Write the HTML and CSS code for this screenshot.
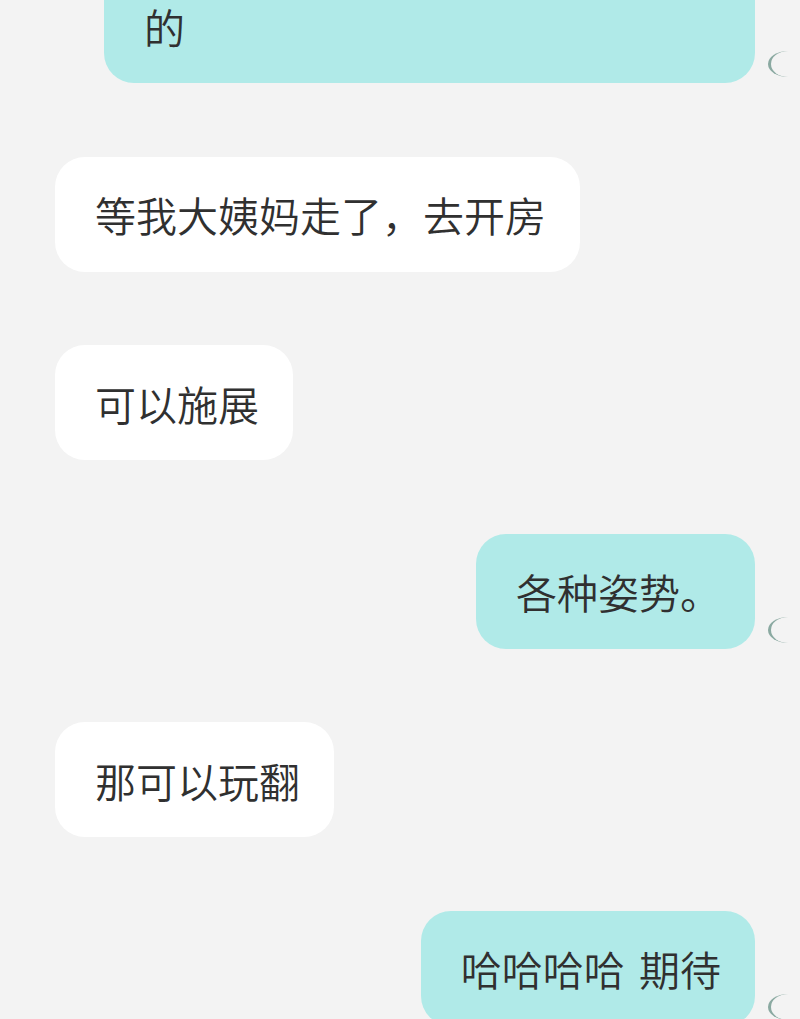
FILE: index.html
```html
<!DOCTYPE html>
<html lang="zh-CN">
<head>
    <meta charset="UTF-8">
    <meta name="viewport" content="width=device-width, initial-scale=1.0">
    <title>聊天记录</title>
    <link rel="stylesheet" href="styles.css">
</head>
<body>

<div class="chat">
    <div class="row out">
        <div class="bubble mine wide">的</div>
        <div class="avatar-edge"></div>
    </div>
    <div class="row in">
        <div class="bubble theirs">等我大姨妈走了，去开房</div>
    </div>
    <div class="row in">
        <div class="bubble theirs">可以施展</div>
    </div>
    <div class="row out">
        <div class="bubble mine">各种姿势。</div>
        <div class="avatar-edge"></div>
    </div>
    <div class="row in">
        <div class="bubble theirs">那可以玩翻</div>
    </div>
    <div class="row out">
        <div class="bubble mine">哈哈哈哈 期待</div>
        <div class="avatar-edge"></div>
    </div>
</div>

</body>
</html>
```

FILE: styles.css
```css
html, body {
    overflow: hidden;
}
body {
    margin: 0;
    background-color: #f3f3f3;
    font-family: "Noto Sans CJK SC", "Noto Sans", sans-serif;
    font-weight: 350;
    color: #303030;
}
.chat {
    display: flex;
    flex-direction: column;
    gap: 73.5px;
    margin-top: -32px;
    padding: 0 12px 0 55px;
}
.row {
    display: flex;
    align-items: flex-end;
}
.row.in {
    justify-content: flex-start;
}
.row.out {
    justify-content: flex-end;
}
.bubble {
    box-sizing: border-box;
    height: 115px;
    padding: 0 34px 0 40px;
    display: flex;
    align-items: center;
    font-size: 41px;
    line-height: 48px;
    word-spacing: 5px;
    border-radius: 30px;
    white-space: pre;
}
.bubble.theirs {
    background-color: #ffffff;
}
.bubble.mine {
    background-color: #b0eae8;
}
.bubble.wide {
    width: 651px;
}
.avatar-edge {
    box-sizing: border-box;
    width: 20px;
    height: 26px;
    margin: 0 0 6px 13px;
    border-left: 3px solid #8aa9a1;
    border-radius: 100% 0 0 100% / 50% 0 0 50%;
}
```
